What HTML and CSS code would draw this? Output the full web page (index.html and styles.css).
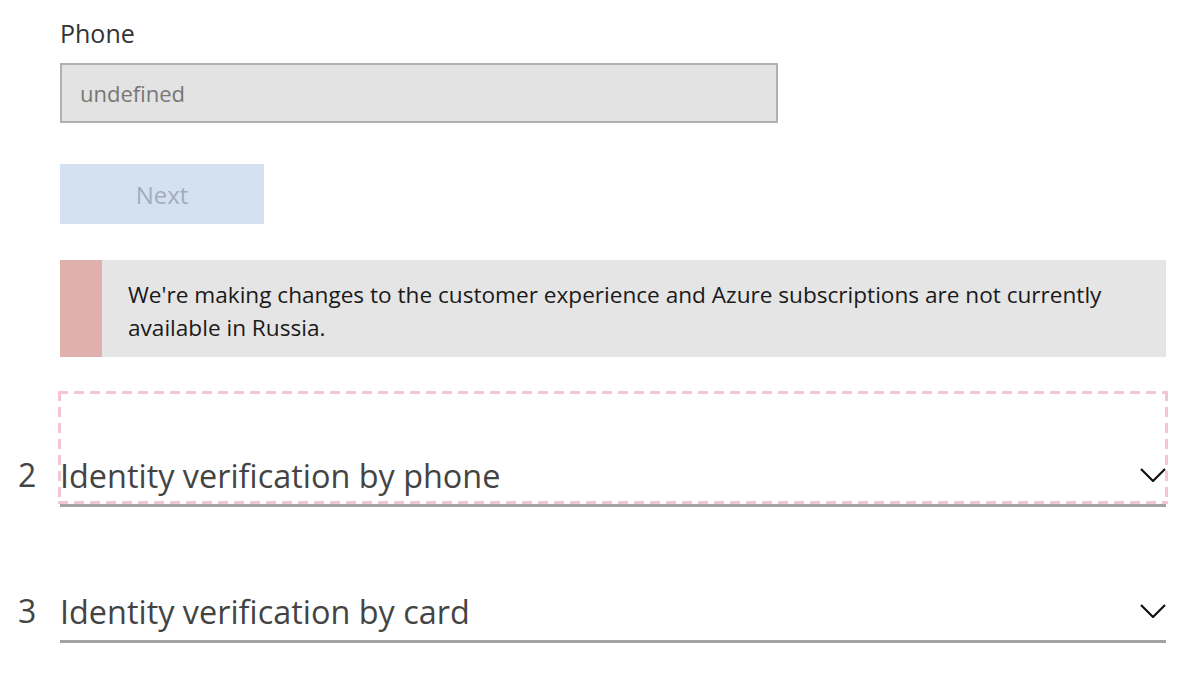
FILE: index.html
```html
<!DOCTYPE html>
<html lang="en">
<head>
<meta charset="utf-8">
<title>Identity verification</title>
<link rel="stylesheet" href="styles.css">
</head>
<body>
<div class="page">
  <div class="step-body">
    <label class="field-label" for="phone">Phone</label>
    <input class="field-input" id="phone" type="text" value="undefined" disabled>
    <button class="btn-next" type="button" disabled>Next</button>
    <div class="notice">
      <div class="notice-bar"></div>
      <p class="notice-text">We're making changes to the customer experience and Azure subscriptions are not currently available in Russia.</p>
    </div>
  </div>

  <div class="section">
    <span class="section-num">2</span>
    <div class="section-head focused">
      <span class="section-title">Identity verification by phone</span>
      <svg class="chevron" viewBox="0 0 26 14" width="26" height="14"><path d="M1 1 L13 13 L25 1" fill="none" stroke="#111" stroke-width="2.2"/></svg>
    </div>
  </div>

  <div class="section">
    <span class="section-num">3</span>
    <div class="section-head">
      <span class="section-title">Identity verification by card</span>
      <svg class="chevron" viewBox="0 0 26 14" width="26" height="14"><path d="M1 1 L13 13 L25 1" fill="none" stroke="#111" stroke-width="2.2"/></svg>
    </div>
  </div>
</div>
</body>
</html>
```

FILE: styles.css
```css
* { box-sizing: border-box; }
html, body { margin: 0; padding: 0; background: #fff; }
body {
  font-family: "Open Sans", "Noto Sans", "Liberation Sans", sans-serif;
  color: #333;
}
.page {
  padding: 16px 0 0 18px;
  width: 1166px;
}
.step-body {
  margin-left: 42px;
  display: flex;
  flex-direction: column;
  align-items: flex-start;
}
.field-label {
  font-size: 25px;
  line-height: 34px;
  color: #333;
  margin-bottom: 13px;
}
.field-input {
  width: 718px;
  height: 60px;
  background: #e3e3e3;
  border: 2px solid #b0b0b0;
  padding: 0 0 0 18px;
  font-family: inherit;
  font-size: 22px;
  color: #777;
  margin: 0;
  -webkit-text-fill-color: #777;
  opacity: 1;
}
.btn-next {
  margin-top: 41px;
  width: 204px;
  height: 60px;
  background: #d3e1f1;
  border: none;
  font-family: inherit;
  font-size: 24px;
  color: #a3adba;
  padding: 0;
}
.notice {
  margin-top: 36px;
  width: 100%;
  display: flex;
  background: #e5e5e5;
  min-height: 97px;
}
.notice-bar {
  width: 42px;
  flex: none;
  background: #e0b0ad;
}
.notice-text {
  margin: 0;
  padding: 18px 40px 13px 26px;
  font-size: 22.6px;
  line-height: 33px;
  color: #1a1a1a;
}
.section {
  display: flex;
  align-items: flex-end;
}
.section + .section { margin-top: 20px; }
.step-body + .section { margin-top: 34px; }
.section-num {
  width: 42px;
  flex: none;
  font-size: 32px;
  line-height: 44px;
  color: #444;
  padding-bottom: 10px;
}
.section-head {
  flex: 1;
  height: 116px;
  display: flex;
  align-items: flex-end;
  justify-content: space-between;
  padding-bottom: 7px;
  border-bottom: 3px solid #a3a3a3;
  position: relative;
}
.section-title {
  font-size: 32.4px;
  line-height: 44px;
  color: #444;
}
.chevron {
  margin-bottom: 15px;
  display: block;
}
.focused::after {
  content: "";
  position: absolute;
  left: -2px;
  right: -2px;
  top: 0;
  bottom: 0;
  pointer-events: none;
  background:
    repeating-linear-gradient(90deg, #f4c6d4 0 10px, transparent 10px 16px) left top / 100% 3px no-repeat,
    repeating-linear-gradient(90deg, #f4c6d4 0 10px, transparent 10px 16px) left bottom / 100% 3px no-repeat,
    repeating-linear-gradient(180deg, #f4c6d4 0 10px, transparent 10px 16px) left top / 3px 100% no-repeat,
    repeating-linear-gradient(180deg, #f4c6d4 0 10px, transparent 10px 16px) right top / 3px 100% no-repeat;
}
```
